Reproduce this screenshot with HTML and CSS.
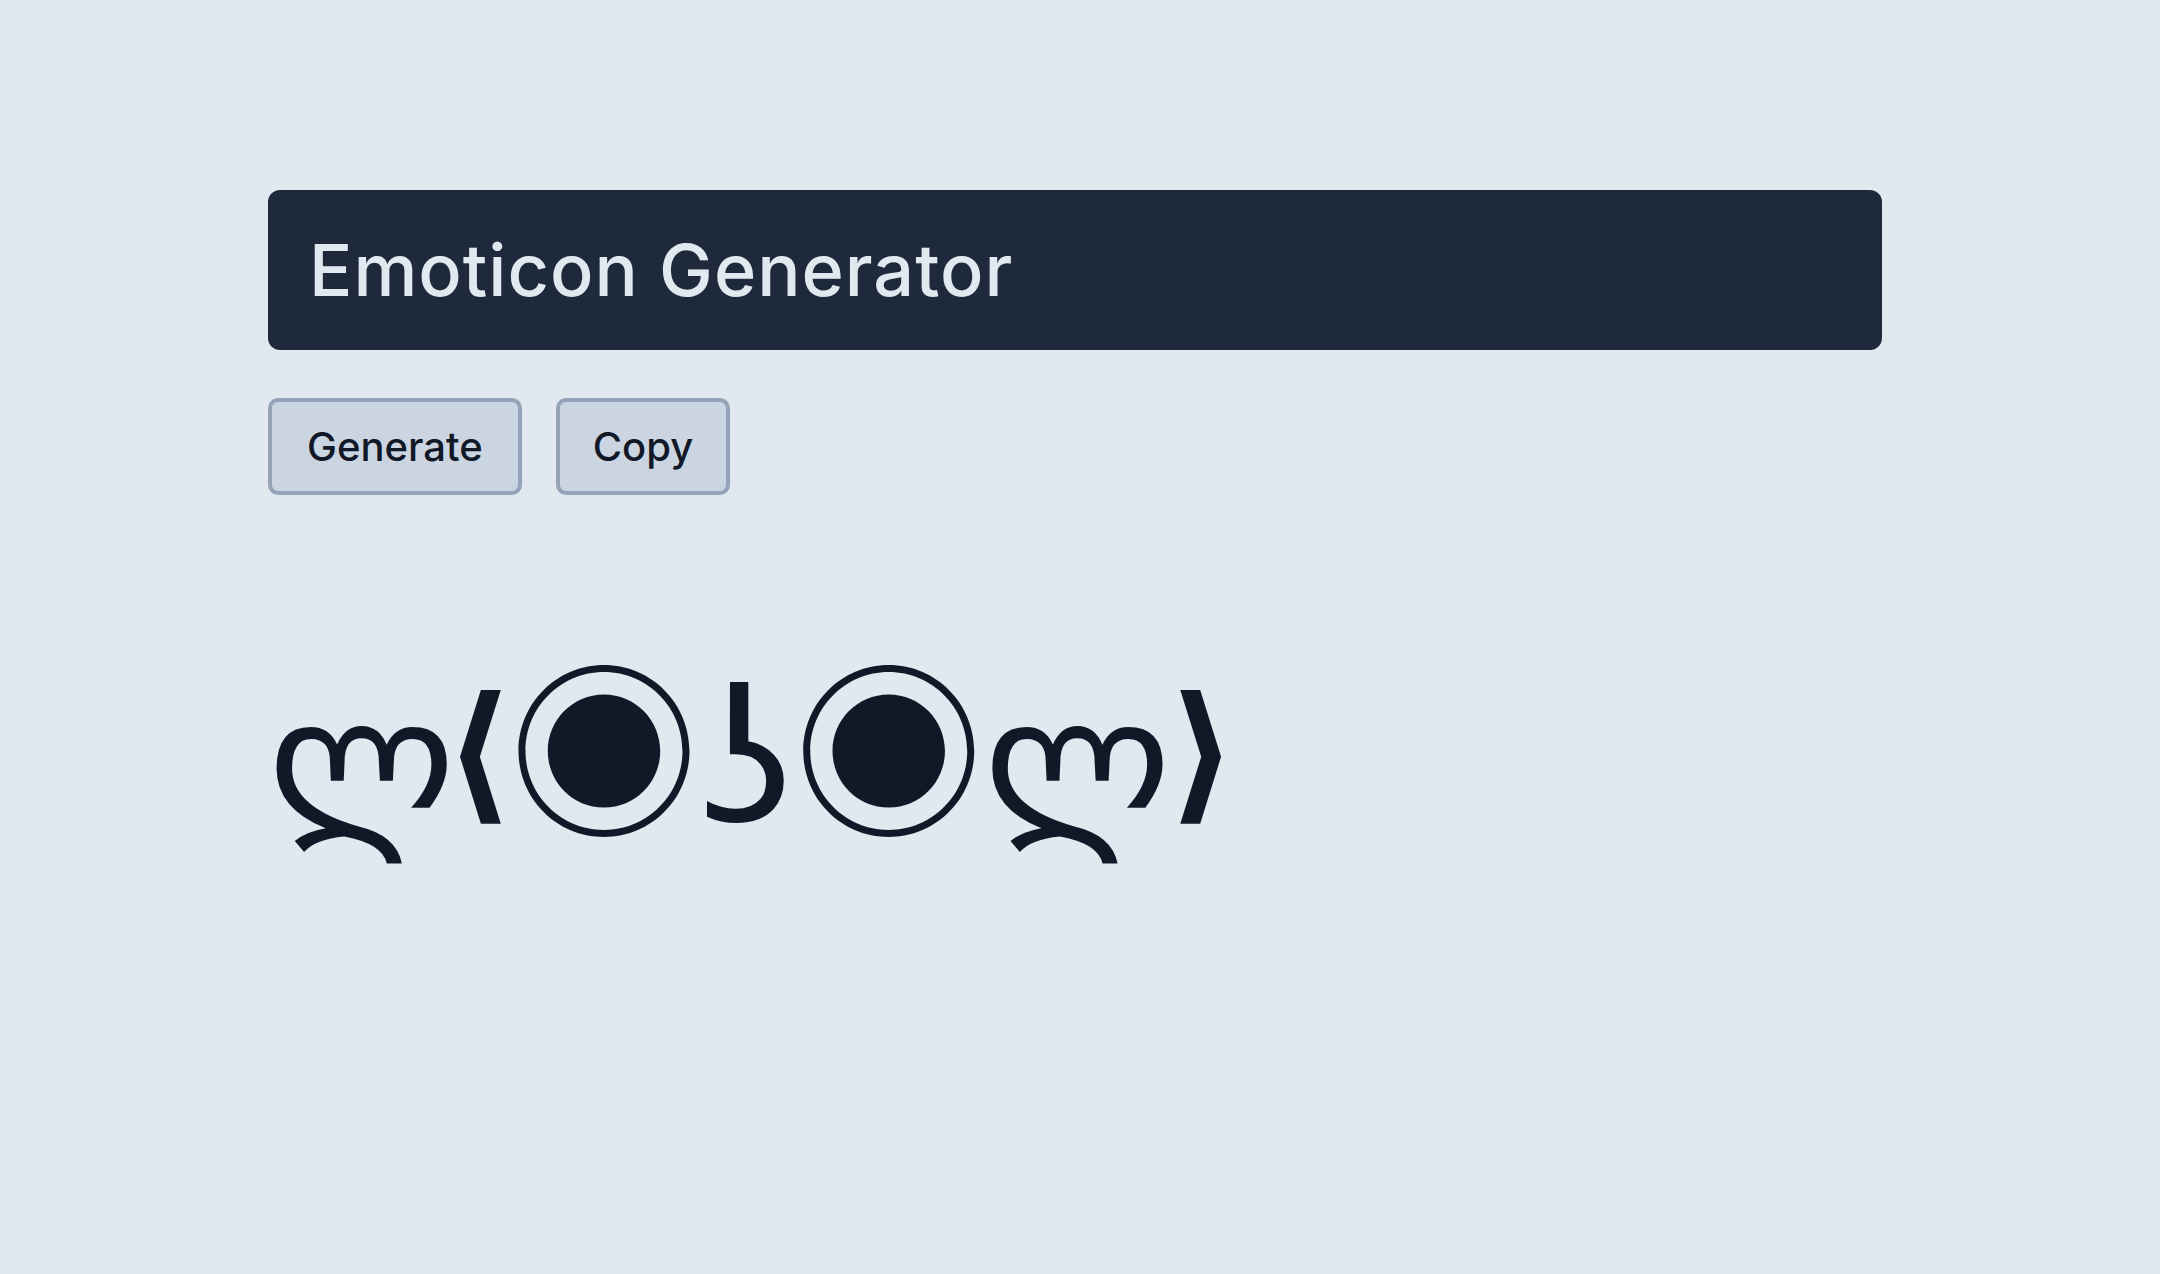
FILE: index.html
```html
<!DOCTYPE html>
<html lang="en">
<head>
<meta charset="utf-8">
<title>Emoticon Generator</title>
<link rel="stylesheet" href="styles.css">
</head>
<body>
<main class="app">
  <header class="app-header">
    <h1 class="app-title">Emoticon Generator</h1>
  </header>
  <div class="actions">
    <button class="btn" type="button">Generate</button>
    <button class="btn" type="button">Copy</button>
  </div>
  <div class="output"><span class="hand">ლ</span><span class="bracket bracket-open">⟨</span><span class="eye">◉</span><span class="mouth">ʖ</span><span class="eye">◉</span><span class="hand">ლ</span><span class="bracket bracket-close">⟩</span></div>
</main>
</body>
</html>
```
FILE: styles.css
```css
html, body {
  margin: 0;
  padding: 0;
}
body {
  background: #e2e8f0;
  color: #111827;
  font-family: "Inter", "Noto Sans", sans-serif;
  min-height: 1274px;
  box-sizing: border-box;
  padding: 190px 0 0 268px;
}
.app {
  width: 1614px;
}
.app-header {
  background: #1e293b;
  border-radius: 12px;
  height: 160px;
  display: flex;
  align-items: center;
  padding: 0 41px;
  box-sizing: border-box;
}
.app-title {
  margin: 0;
  color: #e2e8f0;
  font-family: "Inter", sans-serif;
  font-weight: 500;
  font-size: 72px;
  letter-spacing: 1px;
  line-height: 1;
}
.actions {
  display: flex;
  gap: 34px;
  margin-top: 48px;
}
.btn {
  height: 97px;
  padding: 0 35px;
  background: #cbd5e1;
  border: 4px solid #94a3b8;
  border-radius: 10px;
  color: #111827;
  font-family: "Inter", sans-serif;
  font-weight: 500;
  font-size: 40px;
  letter-spacing: 0;
}
.btn + .btn {
  padding: 0 33px;
}
.output {
  margin-top: 151px;
  font-family: "DejaVu Sans", sans-serif;
  font-size: 176px;
  line-height: 1;
  color: #111827;
  white-space: nowrap;
}
.hand {
  font-family: "DejaVu Sans", sans-serif;
}
.bracket {
  font-family: "DejaVu Sans", sans-serif;
  font-weight: 700;
  font-size: 150px;
  vertical-align: 0.13em;
}
.bracket-open {
  margin: 0 -4px 0 -11px;
}
.bracket-close {
  margin-left: -3px;
}
.eye {
  font-family: "Noto Sans CJK JP", sans-serif;
  font-size: 190px;
}
.mouth {
  font-family: "DejaVu Sans", sans-serif;
  font-size: 186px;
}
```
